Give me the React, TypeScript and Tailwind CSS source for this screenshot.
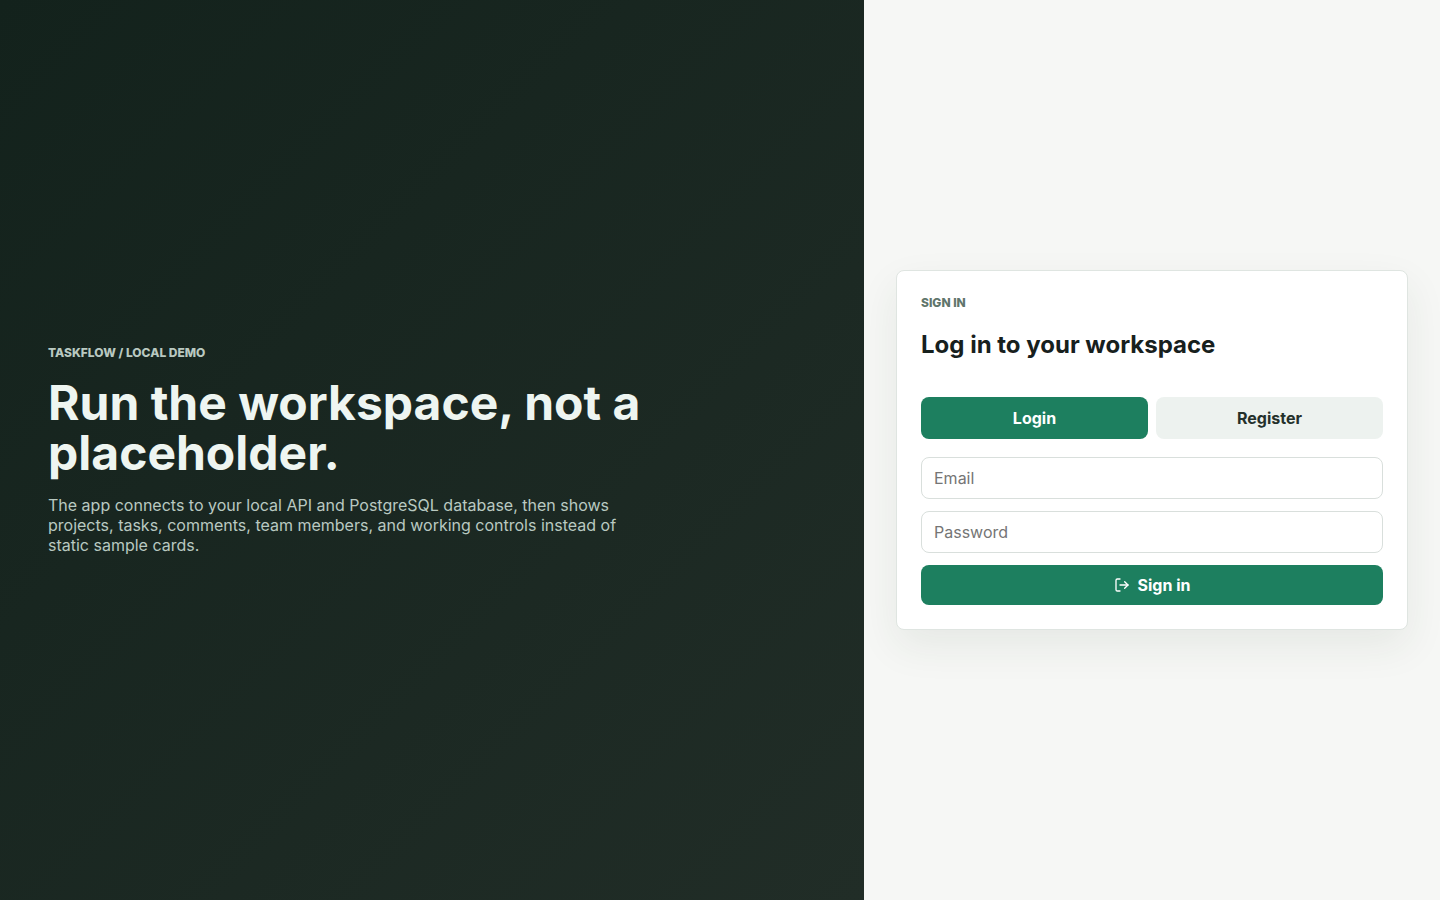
import { LogOut } from "lucide-react";

export default function App() {
  return (
    <main className="grid min-h-screen grid-cols-[3fr_2fr] bg-[#f6f7f5] font-['Inter',sans-serif] text-base leading-5 text-[#17201d]">
      <section className="flex flex-col justify-center bg-[linear-gradient(135deg,#13221c,#212d27)] p-12 text-[#eef5f1]">
        <p className="mb-[17px] text-xs leading-4 font-extrabold text-[#b9c9c1] uppercase">TaskFlow / Local demo</p>
        <h1 className="mb-[17px] max-w-[640px] text-5xl leading-[50px] font-bold">Run the workspace, not a placeholder.</h1>
        <p className="max-w-[600px] text-[#b9c9c1]">
          The app connects to your local API and PostgreSQL database, then shows projects, tasks, comments, team members, and working controls instead of static sample cards.
        </p>
      </section>
      <section className="flex flex-col justify-center p-8">
        <form className="flex flex-col rounded-lg border border-[#dfe5e1] bg-white p-6 shadow-[0_16px_40px_rgba(34,60,38,0.08)]" onSubmit={(e) => e.preventDefault()}>
          <p className="mb-4 text-xs leading-4 font-extrabold text-[#60756b] uppercase">Sign in</p>
          <h2 className="mb-[34px] text-2xl leading-9 font-bold">Log in to your workspace</h2>
          <div className="mb-[18px] grid grid-cols-2 gap-2">
            <button type="button" className="h-[42px] rounded-lg bg-[#1d7f5f] font-bold text-white">Login</button>
            <button type="button" className="h-[42px] rounded-lg bg-[#edf2ef] font-bold text-[#24302b]">Register</button>
          </div>
          <div className="flex flex-col gap-3">
            <input type="email" aria-label="Email" placeholder="Email" className="h-[42px] rounded-lg border border-[#d9dfdc] bg-white px-3 placeholder:text-[#757575]" />
            <input type="password" aria-label="Password" placeholder="Password" className="h-[42px] rounded-lg border border-[#d9dfdc] bg-white px-3 placeholder:text-[#757575]" />
            <button type="submit" className="flex h-10 items-center justify-center gap-2 rounded-lg bg-[#1d7f5f] font-bold text-white">
              <LogOut size={16} aria-hidden="true" />
              Sign in
            </button>
          </div>
        </form>
      </section>
    </main>
  );
}
